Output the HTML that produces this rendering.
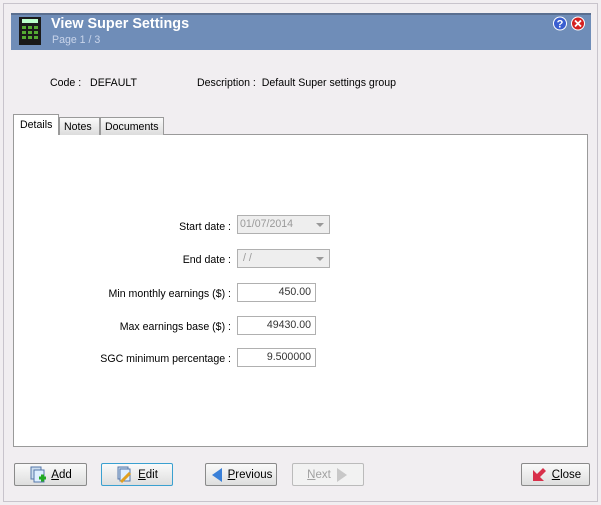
<!DOCTYPE html>
<html><head><style>
*{margin:0;padding:0;box-sizing:border-box}
body{width:601px;height:505px;background:#f1eef1;font-family:"Liberation Sans",sans-serif;font-size:10.6px;color:#000;position:relative;overflow:hidden}
.abs{position:absolute}
.frame{left:3px;top:3px;width:595px;height:499px;border:1px solid #c8c4cc}
.title{left:11px;top:13px;width:580px;height:37px;background:#6f8db8;border-top:2px solid #5a6f90}
.t1{left:51px;top:16px;color:#fff;font-weight:bold;font-size:14.4px}
.t2{left:52px;top:34px;color:#c8d4ea;font-size:10.6px}
.panel{left:13px;top:134px;width:575px;height:313px;background:#fff;border:1px solid #9a9a9a}
.tab{top:117px;height:18px;border:1px solid #9a9a9a;border-bottom:none;background:linear-gradient(#fafafa,#dcdcdc);padding:3px 4px 0;font-size:10.6px}
.lbl{text-align:right;width:200px;left:31px}
.inp{left:237px;width:79px;height:19px;border:1px solid #b0b0b0;background:#fff;text-align:right;padding:2px 4px;font-size:10.6px;color:#333}
.dd{left:237px;width:93px;height:19px;border:1px solid #b0b0b0;background:#eeeeee;color:#999;padding:2px 2px;font-size:10.6px}
.dd:after{content:"";position:absolute;right:5px;top:7px;border:4px solid transparent;border-top:4px solid #999}
.btn{top:463px;height:23px;border:1px solid #8a8a8a;border-radius:2px;background:linear-gradient(#fafafa,#dedede);font-size:11.5px;display:flex;align-items:center;justify-content:center;gap:4px}
u{text-decoration:underline}
</style></head><body>
<div class="abs frame"></div>
<div class="abs title"></div>
<svg class="abs" style="left:18px;top:16px" width="24" height="30"><rect x="1" y="1" width="22" height="28" fill="#1a1a1a"/><rect x="4" y="3" width="16" height="4" fill="#bfc"/><g fill="#5a3"><rect x="4" y="10" width="4" height="3"/><rect x="10" y="10" width="4" height="3"/><rect x="16" y="10" width="4" height="3"/><rect x="4" y="15" width="4" height="3"/><rect x="10" y="15" width="4" height="3"/><rect x="16" y="15" width="4" height="3"/><rect x="4" y="20" width="4" height="3"/><rect x="10" y="20" width="4" height="3"/><rect x="16" y="20" width="4" height="3"/></g></svg>
<div class="abs t1">View Super Settings</div>
<div class="abs t2">Page 1 / 3</div>
<svg class="abs" style="left:553px;top:16px" width="34" height="15"><circle cx="7" cy="7.5" r="6.5" fill="#3a5ed0" stroke="#fff"/><text x="7" y="11.5" fill="#fff" font-size="11" font-weight="bold" text-anchor="middle" font-family="Liberation Sans">?</text><circle cx="25" cy="7.5" r="6.5" fill="#d42020" stroke="#fff"/><path d="M22 4.5l6 6M28 4.5l-6 6" stroke="#fff" stroke-width="1.8"/></svg>
<div class="abs" style="left:50px;top:77px">Code :&nbsp;&nbsp; DEFAULT</div>
<div class="abs" style="left:197px;top:77px">Description :&nbsp; Default Super settings group</div>
<div class="abs panel"></div>
<div class="abs tab" style="left:59px;width:41px">Notes</div>
<div class="abs tab" style="left:100px;width:64px">Documents</div>
<div class="abs tab" style="left:13px;top:114px;height:21px;width:46px;background:#fff;padding-top:4px;padding-left:6px">Details</div>
<div class="abs lbl" style="top:221px">Start date :</div>
<div class="abs dd" style="top:215px">01/07/2014</div>
<div class="abs lbl" style="top:254px">End date :</div>
<div class="abs dd" style="top:249px">&nbsp;/&nbsp;/</div>
<div class="abs lbl" style="top:288px">Min monthly earnings ($) :</div>
<div class="abs inp" style="top:283px">450.00</div>
<div class="abs lbl" style="top:321px">Max earnings base ($) :</div>
<div class="abs inp" style="top:316px">49430.00</div>
<div class="abs lbl" style="top:353px">SGC minimum percentage :</div>
<div class="abs inp" style="top:348px">9.500000</div>
<div class="abs btn" style="left:14px;width:73px"><svg width="18" height="18"><rect x="2" y="1" width="10" height="12" fill="#cde" stroke="#57a"/><rect x="5" y="4" width="10" height="12" fill="#def" stroke="#57a"/><path d="M10 12h7M13.5 8.5v7" stroke="#2a2" stroke-width="3"/></svg><span><u>A</u>dd</span></div>
<div class="abs btn" style="left:101px;width:72px;border-color:#3aa0d0"><svg width="18" height="18"><rect x="2" y="1" width="10" height="12" fill="#cde" stroke="#57a"/><rect x="4" y="3" width="10" height="12" fill="#def" stroke="#57a"/><path d="M5 16l9-9" stroke="#e0a020" stroke-width="3"/></svg><span><u>E</u>dit</span></div>
<div class="abs btn" style="left:205px;width:72px"><svg width="14" height="16"><path d="M12 1v14L2 8z" fill="#3a80d8"/></svg><span><u>P</u>revious</span></div>
<div class="abs btn" style="left:292px;width:72px;color:#a0a0a0;border-color:#bbb;background:#f2f2f2"><span><u>N</u>ext</span><svg width="14" height="16"><path d="M2 1v14L12 8z" fill="#c8c8c8"/></svg></div>
<div class="abs btn" style="left:521px;width:69px"><svg width="18" height="18"><path d="M3 2v11h11l-4-4 6-6-3-3-6 6z" fill="#d8304a" transform="translate(0 2)"/></svg><span><u>C</u>lose</span></div>
</body></html>
